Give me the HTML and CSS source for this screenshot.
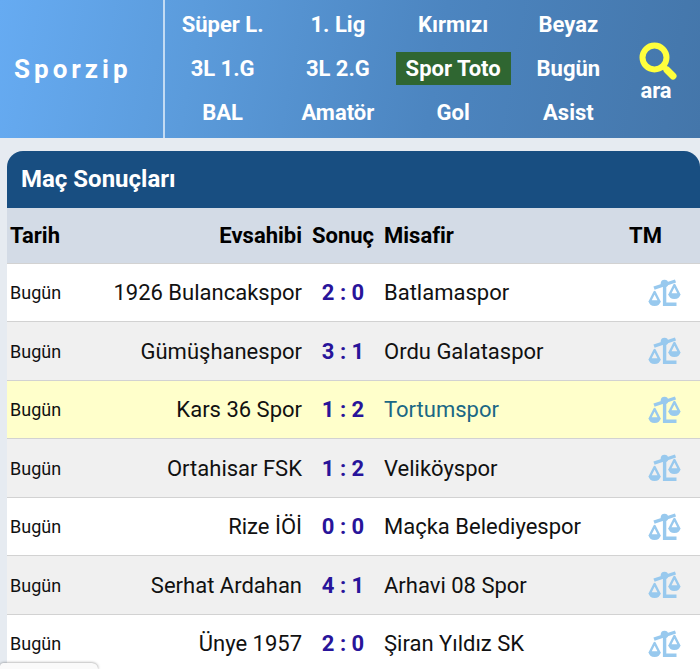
FILE: index.html
```html
<!DOCTYPE html>
<html lang="tr">
<head>
  <meta charset="UTF-8" />
  <meta name="viewport" content="width=device-width, initial-scale=1.0" />
  <title>Sporzip - Maç Sonuçları</title>
  <link rel="stylesheet" href="styles.css">
</head>
<body>
  <!-- Shared icons -->
  <svg class="icon-defs" aria-hidden="true">
    <symbol id="scales" viewBox="0 0 33 28">
      <path d="M6 9.200L27.500 2" fill="none" stroke="currentColor" stroke-width="3.400" />
      <path d="M16.600 4V25.200H28.500" fill="none" stroke="currentColor" stroke-width="3.400" />
      <circle cx="16.500" cy="4.600" r="3.800" fill="currentColor" />
      <g fill="none" stroke="currentColor" stroke-width="2.400" stroke-linejoin="round">
        <path d="M6.600 13L1.800 22.500H11.400Z" />
        <path d="M26.400 6L21.600 15.500H31.200Z" />
      </g>
      <path d="M0.600 22H12.600Q12 27 6.600 27T0.600 22Z" fill="currentColor" />
      <path d="M20.400 15H32.400Q31.800 20 26.400 20T20.400 15Z" fill="currentColor" />
    </symbol>
  </svg>

  <!-- Header -->
  <header class="header">
    <a href="#" class="logo">Sporzip</a>
    <nav class="nav">
      <a href="#" class="nav-link">Süper L.</a>
      <a href="#" class="nav-link">1. Lig</a>
      <a href="#" class="nav-link">Kırmızı</a>
      <a href="#" class="nav-link">Beyaz</a>
      <a href="#" class="nav-link">3L 1.G</a>
      <a href="#" class="nav-link">3L 2.G</a>
      <a href="#" class="nav-link active">Spor Toto</a>
      <a href="#" class="nav-link">Bugün</a>
      <a href="#" class="nav-link">BAL</a>
      <a href="#" class="nav-link">Amatör</a>
      <a href="#" class="nav-link">Gol</a>
      <a href="#" class="nav-link">Asist</a>
    </nav>
    <a href="#" class="search">
      <svg class="search-icon" viewBox="0 0 38 38" aria-hidden="true">
        <circle cx="15.500" cy="15.500" r="12" fill="none" stroke="currentColor" stroke-width="6" />
        <path d="M24 24L34 34" stroke="currentColor" stroke-width="5" />
        <path d="M28 28L34 34" stroke="currentColor" stroke-width="7" stroke-linecap="round" />
      </svg>
      ara
    </a>
  </header>

  <!-- Results -->
  <main class="results">
    <h1 class="results-title">Maç Sonuçları</h1>
    <table class="results-table">
      <thead>
        <tr>
          <th class="date">Tarih</th>
          <th class="home">Evsahibi</th>
          <th class="score">Sonuç</th>
          <th class="away">Misafir</th>
          <th class="compare">TM</th>
        </tr>
      </thead>
      <tbody>
        <tr>
          <td class="date">Bugün</td>
          <td class="home">1926 Bulancakspor</td>
          <td class="score">2 : 0</td>
          <td class="away">Batlamaspor</td>
          <td class="compare"><a href="#" aria-label="TM"><svg class="scales"><use href="#scales" /></svg></a></td>
        </tr>
        <tr>
          <td class="date">Bugün</td>
          <td class="home">Gümüşhanespor</td>
          <td class="score">3 : 1</td>
          <td class="away">Ordu Galataspor</td>
          <td class="compare"><a href="#" aria-label="TM"><svg class="scales"><use href="#scales" /></svg></a></td>
        </tr>
        <tr class="selected">
          <td class="date">Bugün</td>
          <td class="home">Kars 36 Spor</td>
          <td class="score">1 : 2</td>
          <td class="away"><a href="#">Tortumspor</a></td>
          <td class="compare"><a href="#" aria-label="TM"><svg class="scales"><use href="#scales" /></svg></a></td>
        </tr>
        <tr>
          <td class="date">Bugün</td>
          <td class="home">Ortahisar FSK</td>
          <td class="score">1 : 2</td>
          <td class="away">Veliköyspor</td>
          <td class="compare"><a href="#" aria-label="TM"><svg class="scales"><use href="#scales" /></svg></a></td>
        </tr>
        <tr>
          <td class="date">Bugün</td>
          <td class="home">Rize İÖİ</td>
          <td class="score">0 : 0</td>
          <td class="away">Maçka Belediyespor</td>
          <td class="compare"><a href="#" aria-label="TM"><svg class="scales"><use href="#scales" /></svg></a></td>
        </tr>
        <tr>
          <td class="date">Bugün</td>
          <td class="home">Serhat Ardahan</td>
          <td class="score">4 : 1</td>
          <td class="away">Arhavi 08 Spor</td>
          <td class="compare"><a href="#" aria-label="TM"><svg class="scales"><use href="#scales" /></svg></a></td>
        </tr>
        <tr>
          <td class="date">Bugün</td>
          <td class="home">Ünye 1957</td>
          <td class="score">2 : 0</td>
          <td class="away">Şiran Yıldız SK</td>
          <td class="compare"><a href="#" aria-label="TM"><svg class="scales"><use href="#scales" /></svg></a></td>
        </tr>
      </tbody>
    </table>
  </main>

  <!-- Tab that peeks in at the bottom -->
  <div class="bottom-tab"></div>
</body>
</html>
```

FILE: styles.css
```css
/* Global Reset & Base Styles */
* {
  margin: 0;
  padding: 0;
  box-sizing: border-box;
}
body {
  background-color: #e6ebf1;
  color: #111;
  font-family: Roboto, Arial, sans-serif;
  font-size: 22px;
}
a {
  color: inherit;
  text-decoration: none;
}
.icon-defs {
  display: none;
}
/* Header */
.header {
  display: grid;
  grid-template-columns: 165px 1fr 60px;
  padding-right: 14px;
  background: linear-gradient(100deg, #66abf2 0%, #5b9bdb 28%, #4c85c0 62%, #4476aa 100%);
  color: #fff;
  font-weight: bold;
}
.logo {
  display: flex;
  align-items: center;
  padding-left: 14px;
  border-right: 2px solid #c3dbf3;
  font-size: 26px;
  letter-spacing: 4px;
}
.nav {
  display: grid;
  grid-template-columns: repeat(4, 1fr);
  row-gap: 11px;
  padding: 8px 0 9px;
}
.nav-link {
  height: 33px;
  line-height: 33px;
  text-align: center;
  white-space: nowrap;
}
.nav-link.active {
  background-color: #2f6631;
}
.search {
  display: flex;
  flex-direction: column;
  align-items: center;
  padding-top: 42px;
  line-height: 22px;
}
.search-icon {
  width: 38px;
  height: 38px;
  margin-left: 4px;
  color: #ffff3c;
}
/* Results */
.results {
  margin: 13px 0 0 7px;
}
.results-title {
  height: 57px;
  padding-left: 14px;
  border-radius: 16px 16px 0 0;
  background-color: #184e81;
  color: #fff;
  font-size: 24px;
  line-height: 57px;
}
.results-table {
  width: 100%;
  table-layout: fixed;
  border-spacing: 0;
}
.results-table th,
.results-table td {
  height: 58px;
  border-bottom: 1px solid #d2d2d2;
  background-color: #fff;
  text-align: left;
  white-space: nowrap;
}
.results-table th {
  height: 56px;
  background-color: #d3dbe6;
  color: #000;
}
.results-table tr:nth-child(even) td {
  height: 59px;
  background-color: #f0f0f0;
}
.results-table tr.selected td {
  background-color: #ffffcb;
}
.results-table .date {
  width: 70px;
  padding-left: 3px;
}
.results-table td.date {
  font-size: 18px;
}
.results-table .home {
  padding-right: 5px;
  text-align: right;
}
.results-table .score {
  width: 72px;
  text-align: center;
}
.results-table td.score {
  color: #28149a;
  font-weight: bold;
}
.results-table .away {
  width: 245px;
  padding-left: 5px;
}
.results-table .compare {
  width: 76px;
  padding-left: 5px;
}
.results-table td.compare {
  text-align: center;
}
.selected .away a {
  color: #1b6885;
}
.scales {
  width: 33px;
  height: 28px;
  color: #98c9ee;
  vertical-align: middle;
}
/* Bottom Tab */
.bottom-tab {
  position: fixed;
  bottom: 0;
  left: 0;
  width: 98px;
  height: 6px;
  border-radius: 6px 10px 0 0;
  background-color: #fafafa;
  box-shadow: 0 0 3px rgba(0, 0, 0, 0.5);
}
```
